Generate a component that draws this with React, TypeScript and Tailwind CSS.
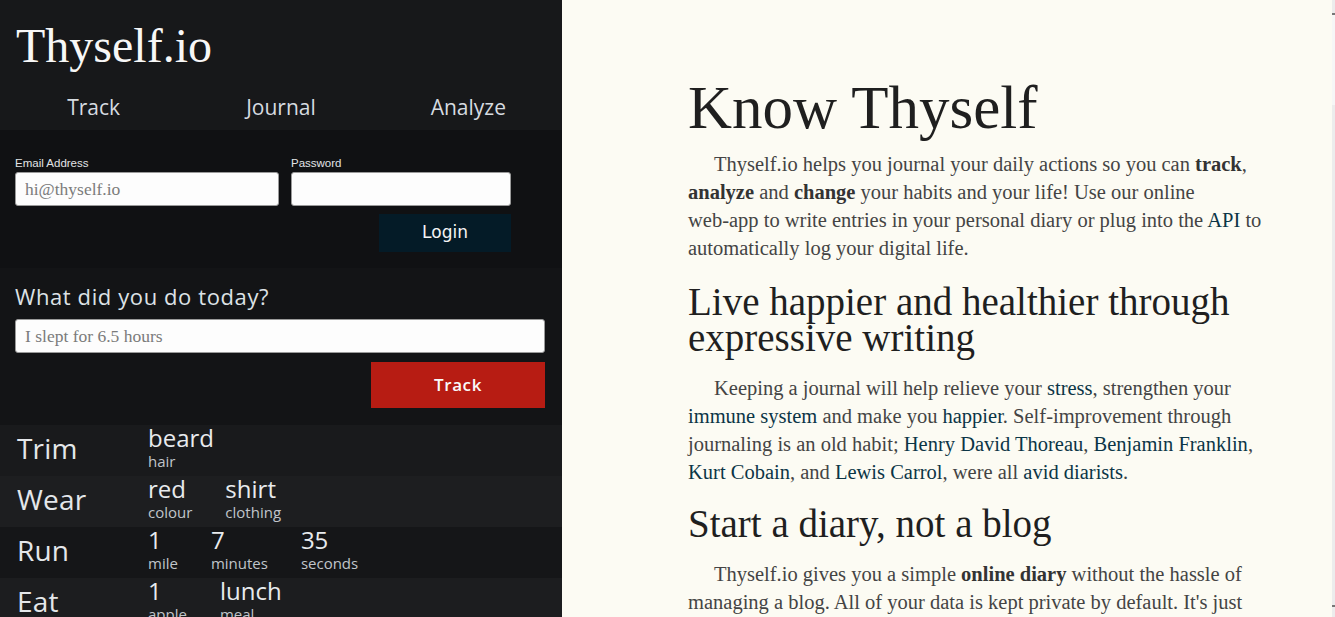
import React from "react";

type Row = { label: string; bg: string; items: [string, string][] };

const rows: Row[] = [
  { label: "Trim", bg: "bg-[#191a1c]", items: [["beard", "hair"]] },
  { label: "Wear", bg: "bg-[#1d1e20]", items: [["red", "colour"], ["shirt", "clothing"]] },
  { label: "Run", bg: "bg-[#151618]", items: [["1", "mile"], ["7", "minutes"], ["35", "seconds"]] },
  { label: "Eat", bg: "bg-[#1c1d1f]", items: [["1", "apple"], ["lunch", "meal"]] },
];

function A({ children }: { children: React.ReactNode }) {
  return <a className="text-[#0b3546] no-underline">{children}</a>;
}

function B({ children }: { children: React.ReactNode }) {
  return <strong className="font-bold text-[#333333]">{children}</strong>;
}

export default function App() {
  return (
    <div className="flex h-[617px] w-[1335px] overflow-hidden">
      {/* Left panel */}
      <div className="flex w-[562px] shrink-0 flex-col bg-[#161719] font-['Open_Sans',sans-serif] font-normal">
        <header className="h-[130px] shrink-0 bg-[#17181a] pt-[18px]">
          <h1 className="pl-[16px] font-['Liberation_Serif',serif] text-[48px] font-normal leading-[56px] text-[#f7f7f7]">
            Thyself.io
          </h1>
          <nav className="mt-[21px] grid grid-cols-3 text-center text-[21px] font-normal leading-[24px] text-[#d6dbe0]">
            <a>Track</a>
            <a>Journal</a>
            <a>Analyze</a>
          </nav>
        </header>

        <section className="h-[138px] shrink-0 bg-[#101113] pl-[15px] pt-[26px]">
          <div className="flex gap-[12px]">
            <label className="flex w-[264px] flex-col">
              <span className="mb-[2px] font-['Liberation_Sans',sans-serif] text-[11.5px] font-normal leading-[14px] text-[#e2e4e6]">
                Email Address
              </span>
              <input
                placeholder="hi@thyself.io"
                className="h-[34px] w-full rounded-[3px] border border-[#9a9a9a] bg-[#fdfdfd] pl-[9px] font-['Liberation_Serif',serif] text-[17.5px] font-normal text-[#333] outline-none placeholder:text-[#7b7b7b]"
              />
            </label>
            <label className="flex w-[220px] flex-col">
              <span className="mb-[2px] font-['Liberation_Sans',sans-serif] text-[11.5px] font-normal leading-[14px] text-[#e2e4e6]">
                Password
              </span>
              <input
                type="password"
                className="h-[34px] w-full rounded-[3px] border border-[#9a9a9a] bg-[#fdfdfd] pl-[9px] outline-none"
              />
            </label>
          </div>
          <div className="flex w-[496px] justify-end">
            <button className="mt-[8px] h-[38px] w-[132px] bg-[#041b27] font-['DejaVu_Sans',sans-serif] text-[17px] font-normal text-[#f4f4f4]">
              Login
            </button>
          </div>
        </section>

        <section className="h-[157px] shrink-0 bg-[#131416] pl-[15px] pr-[17px] pt-[15px]">
          <h2 className="text-[22px] font-normal leading-[26px] tracking-[0.6px] text-[#dde2e6]">What did you do today?</h2>
          <input
            placeholder="I slept for 6.5 hours"
            className="mt-[10px] h-[34px] w-full rounded-[3px] border border-[#9a9a9a] bg-[#fdfdfd] pl-[9px] font-['Liberation_Serif',serif] text-[17.5px] font-normal text-[#333] outline-none placeholder:text-[#7b7b7b]"
          />
          <div className="flex justify-end">
            <button className="mt-[9px] h-[46px] w-[174px] bg-[#b71c13] text-[17px] font-semibold tracking-[0.6px] text-[#fafafa]">
              Track
            </button>
          </div>
        </section>

        <div className="flex flex-col">
          {rows.map((r) => (
            <div key={r.label} className={`flex h-[51px] shrink-0 ${r.bg}`}>
              <div className="w-[148px] shrink-0 pl-[17px] text-[28px] font-normal leading-[46px] tracking-[0.2px] text-[#e4e7ea]">
                {r.label}
              </div>
              <div className="flex gap-[33px]">
                {r.items.map(([v, u], i) => (
                  <div key={i} className="flex flex-col">
                    <span className="text-[24px] font-normal leading-[26px] text-[#e8ebee]">{v}</span>
                    <span className="text-[15px] font-normal leading-[20px] text-[#c0c5ca]">{u}</span>
                  </div>
                ))}
              </div>
            </div>
          ))}
        </div>
      </div>

      {/* Right panel */}
      <div className="flex flex-1 bg-[#fcfbf3]">
        <main className="flex-1 pl-[126px] pt-[75px] font-['Liberation_Serif',serif] text-[#444444]">
          <div className="w-[600px]">
            <h1 className="mb-[9px] text-[61px] leading-[66px] text-[#1f1f1f]">Know Thyself</h1>
            <p className="indent-[26px] text-[20.5px] leading-[28px] whitespace-nowrap">
              Thyself.io helps you journal your daily actions so you can <B>track</B>,<br />
              <B>analyze</B> and <B>change</B> your habits and your life! Use our online<br />
              web-app to write entries in your personal diary or plug into the <A>API</A> to<br />
              automatically log your digital life.
            </p>
            <h2 className="mb-[18px] mt-[22px] text-[39px] leading-[36px] text-[#1f1f1f]">
              Live happier and healthier through
              <br />
              expressive writing
            </h2>
            <p className="indent-[26px] text-[20.5px] leading-[28px] whitespace-nowrap">
              Keeping a journal will help relieve your <A>stress</A>, strengthen your<br />
              <A>immune system</A> and make you <A>happier</A>. Self-improvement through<br />
              journaling is an old habit; <A>Henry David Thoreau</A>, <A>Benjamin Franklin</A>,<br />
              <A>Kurt Cobain</A>, and <A>Lewis Carrol</A>, were all <A>avid diarists</A>.
            </p>
            <h2 className="mb-[18px] mt-[20px] text-[39px] leading-[36px] text-[#1f1f1f]">
              Start a diary, not a blog
            </h2>
            <p className="indent-[26px] text-[20.5px] leading-[28px] whitespace-nowrap">
              Thyself.io gives you a simple <B>online diary</B> without the hassle of<br />
              managing a blog. All of your data is kept private by default. It's just<br />
              you and your journal.
            </p>
          </div>
        </main>
        <div className="flex w-[3px] flex-col bg-[#ececec]">
          <div className="mt-[13px] h-[2px] bg-[#777]" />
          <div className="h-[90px] bg-[#f6f6f6]" />
          <div className="flex-1" />
          <div className="mb-[10px] h-[2px] bg-[#777]" />
        </div>
      </div>
    </div>
  );
}
